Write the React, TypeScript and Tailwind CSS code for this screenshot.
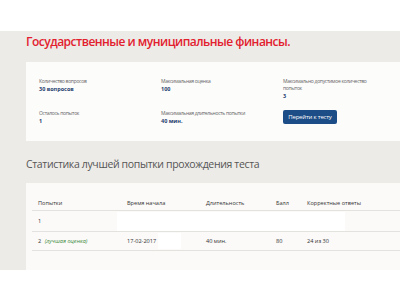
export default function App() {
  const font = { fontFamily: '"Open Sans", "Noto Sans", sans-serif' };
  return (
    <div className="w-[400px] h-[300px] bg-white overflow-hidden" style={font}>
      <div className="h-[31px]" />
      <div className="bg-[#edebe8] h-[239px] pl-[26px] flex flex-col">
        <div className="h-[31px] pt-[4px]">
          <h1 className="text-[12px] leading-[13px] font-semibold text-[#e2202e] tracking-[-0.5px]">
            Государственные и муниципальные финансы.
          </h1>
        </div>
        <div className="bg-[#fcfcfb] h-[79px] pl-[13px] pt-[16px] grid grid-cols-[122px_122px_1fr]">
          <div className="flex flex-col">
            <div className="text-[5px] leading-[7px] tracking-[-0.3px] text-[#666]">Количество вопросов</div>
            <div className="text-[5.5px] leading-[8px] font-bold text-[#25406e]">30 вопросов</div>
            <div className="h-[17px]" />
            <div className="text-[5px] leading-[7px] tracking-[-0.3px] text-[#666]">Осталось попыток</div>
            <div className="text-[5.5px] leading-[8px] font-bold text-[#25406e]">1</div>
          </div>
          <div className="flex flex-col">
            <div className="text-[5px] leading-[7px] tracking-[-0.3px] text-[#666]">Максимальная оценка</div>
            <div className="text-[5.5px] leading-[8px] font-bold text-[#25406e]">100</div>
            <div className="h-[17px]" />
            <div className="text-[5px] leading-[7px] tracking-[-0.3px] text-[#666]">Максимальная длительность попытки</div>
            <div className="text-[5.5px] leading-[8px] font-bold text-[#25406e]">40 мин.</div>
          </div>
          <div className="flex flex-col">
            <div className="text-[5px] leading-[6.5px] tracking-[-0.3px] text-[#666] w-[92px]">
              Максимально допустимое количество попыток
            </div>
            <div className="text-[5.5px] leading-[8px] font-bold text-[#25406e] mt-[1px]">3</div>
            <div className="mt-[10px] w-[54px] h-[14px] rounded-[2px] bg-[#1d4d86] text-white text-[6px] tracking-[-0.2px] flex items-center justify-center">
              Перейти к тесту
            </div>
          </div>
        </div>
        <div className="h-[42px] pt-[4px] flex items-center">
          <h2 className="text-[10.5px] text-[#555] leading-none tracking-[-0.35px]">
            Статистика лучшей попытки прохождения теста
          </h2>
        </div>
        <div className="bg-[#fbfaf8] flex-1 pl-[6px] pt-[14px]">
          <div className="text-[5.6px] text-[#333]">
            <div className="h-[14px] flex items-center border-b border-[#e4e2de]">
              <div className="w-[95px] pl-[6px]">Попытки</div>
              <div className="w-[79px]">Время начала</div>
              <div className="w-[70px]">Длительность</div>
              <div className="w-[31px]">Балл</div>
              <div>Корректные ответы</div>
            </div>
            <div className="h-[21px] flex items-center border-b border-[#e4e2de] relative">
              <div className="w-[95px] pl-[6px]">1</div>
              <div className="absolute left-[85px] top-[1px] w-[228px] h-[19px] bg-white" />
            </div>
            <div className="h-[19px] flex items-center border-b border-[#e4e2de] relative">
              <div className="w-[95px] pl-[6px]">
                2 <span className="italic text-[#3d8a3d] ml-[2px]">(лучшая оценка)</span>
              </div>
              <div className="w-[79px]">17-02-2017</div>
              <div className="w-[70px]">40 мин.</div>
              <div className="w-[31px]">80</div>
              <div>24 из 30</div>
              <div className="absolute left-[126px] top-[1px] w-[23px] h-[16px] bg-white" />
            </div>
          </div>
        </div>
      </div>
    </div>
  );
}
